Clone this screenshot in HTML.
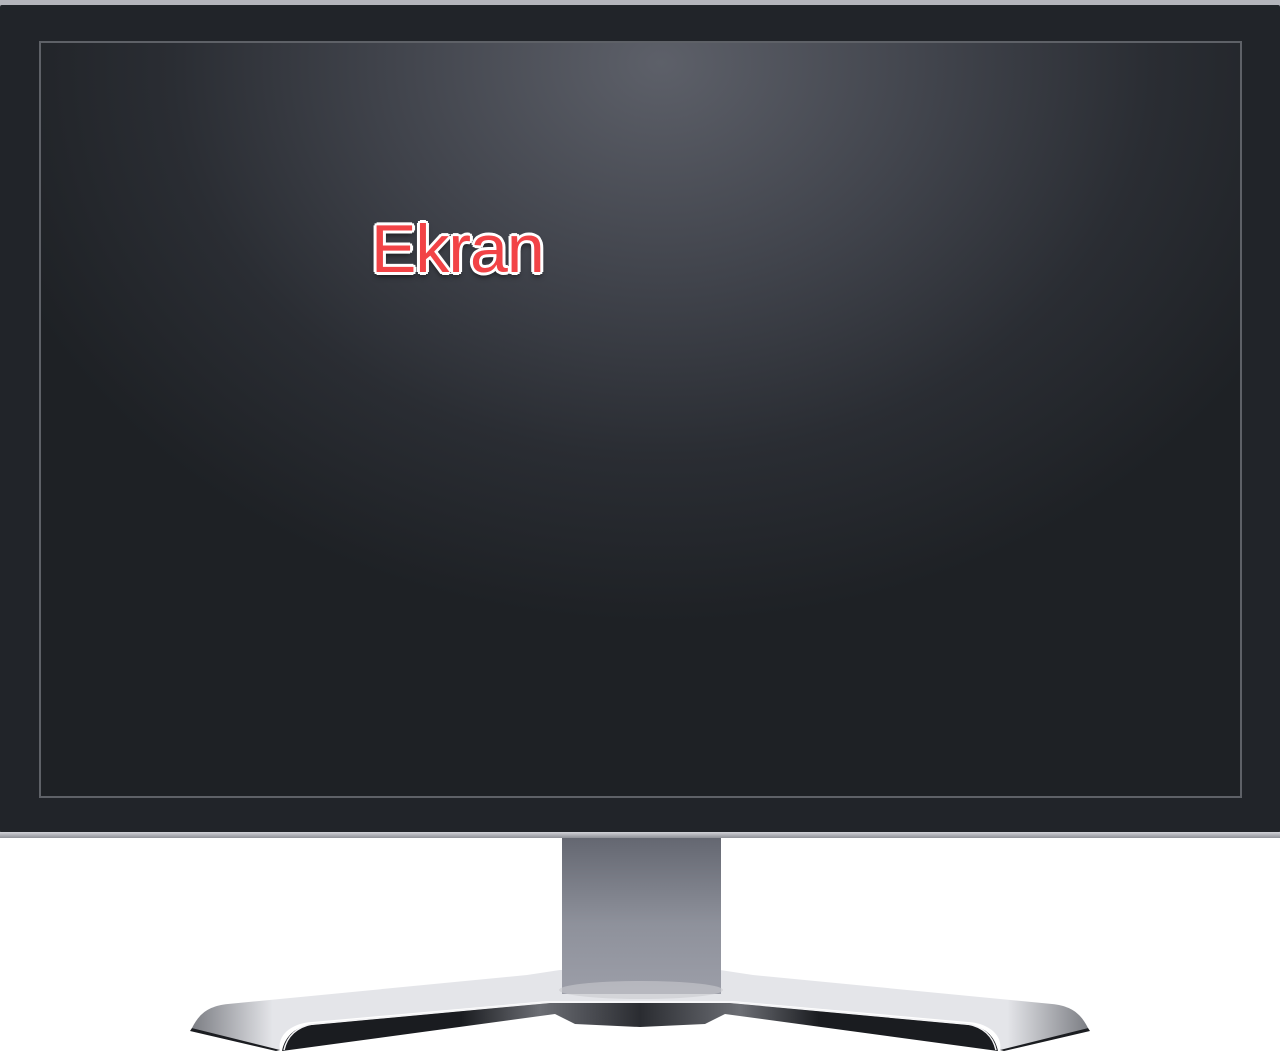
<!DOCTYPE html>
<html><head><style>
html,body{margin:0;padding:0;background:#fff;width:1280px;height:1052px;overflow:hidden;position:relative}
.top{position:absolute;left:0;top:0;width:1280px;height:6px;background:#b4b5bb}
.bezel{position:absolute;left:0;top:5px;width:1280px;height:828px;background:#212429;border-radius:2px}
.screen{position:absolute;left:39px;top:36px;width:1199px;height:753px;border:2px solid #5e6167;
background:radial-gradient(ellipse 700px 560px at 620px 20px,#5d6069 0%,#40434b 40%,#2a2d33 70%,#1e2125 100%)}
.strip{position:absolute;left:0;top:832px;width:1280px;height:6px;background:linear-gradient(#d2d3d8,#8e9097)}
.neck{position:absolute;left:562px;top:838px;width:159px;height:156px;background:linear-gradient(#646771,#8e919b 55%,#9c9ea8)}
.txt{position:absolute;left:371px;top:210px;font:68px "Liberation Sans",sans-serif;color:#f24346;letter-spacing:-1px;
text-shadow:2px 0 0 #fff,-2px 0 0 #fff,0 2px 0 #fff,0 -2px 0 #fff,2px 2px 0 #fff,-2px -2px 0 #fff,2px -2px 0 #fff,-2px 2px 0 #fff,3px 0 0 #fff,-3px 0 0 #fff,0 3px 0 #fff,0 -3px 0 #fff,0 4px 6px rgba(0,0,0,.7)}
</style></head><body>
<div class="top"></div>
<div class="bezel"><div class="screen"></div></div>
<div class="strip"></div>
<svg width="1280" height="1052" style="position:absolute;left:0;top:0">
<defs>
<linearGradient id="g1" x1="0" x2="1"><stop offset="0" stop-color="#7c7e84"/><stop offset=".09" stop-color="#e4e5e9"/><stop offset=".91" stop-color="#e4e5e9"/><stop offset="1" stop-color="#7c7e84"/></linearGradient>
<linearGradient id="g2" x1="0" x2="1"><stop offset="0" stop-color="#1a1c20"/><stop offset=".25" stop-color="#1a1c20"/><stop offset=".36" stop-color="#6c6e74"/><stop offset=".5" stop-color="#2a2c31"/><stop offset=".64" stop-color="#6c6e74"/><stop offset=".75" stop-color="#1a1c20"/><stop offset="1" stop-color="#1a1c20"/></linearGradient>
</defs>
<path d="M192,1028 C200,1012 210,1006 228,1004 L527,975 L560,970 L720,970 L753,975 L1052,1004 C1070,1006 1080,1012 1088,1028 L1000,1050 C1003,1035 988,1023 968,1022 L732,1001 L548,1001 L312,1022 C292,1023 277,1035 280,1050 Z" fill="url(#g1)"/>
<path d="M192,1028 L280,1050 L276,1051 L190,1031 Z M1088,1028 L1000,1050 L1004,1051 L1090,1031 Z" fill="#1b1d21"/>
<path d="M282,1051 C285,1036 296,1026 312,1025 L550,1003 L730,1003 L968,1025 C984,1026 995,1036 998,1051 L725,1014 L705,1024 L640,1027 L575,1024 L555,1014 Z" fill="url(#g2)"/>
<path d="M284,1050 C287,1036 297,1027 312,1024 L550,1002 L730,1002 L968,1024 C983,1027 993,1036 996,1050" fill="none" stroke="#f4f4f6" stroke-width="1.5"/>
</svg>
<div class="neck"></div>
<svg width="1280" height="1052" style="position:absolute;left:0;top:0"><ellipse cx="641" cy="990" rx="82" ry="9" fill="#c9cacf" opacity=".6"/></svg>
<div class="txt">Ekran</div>
</body></html>
